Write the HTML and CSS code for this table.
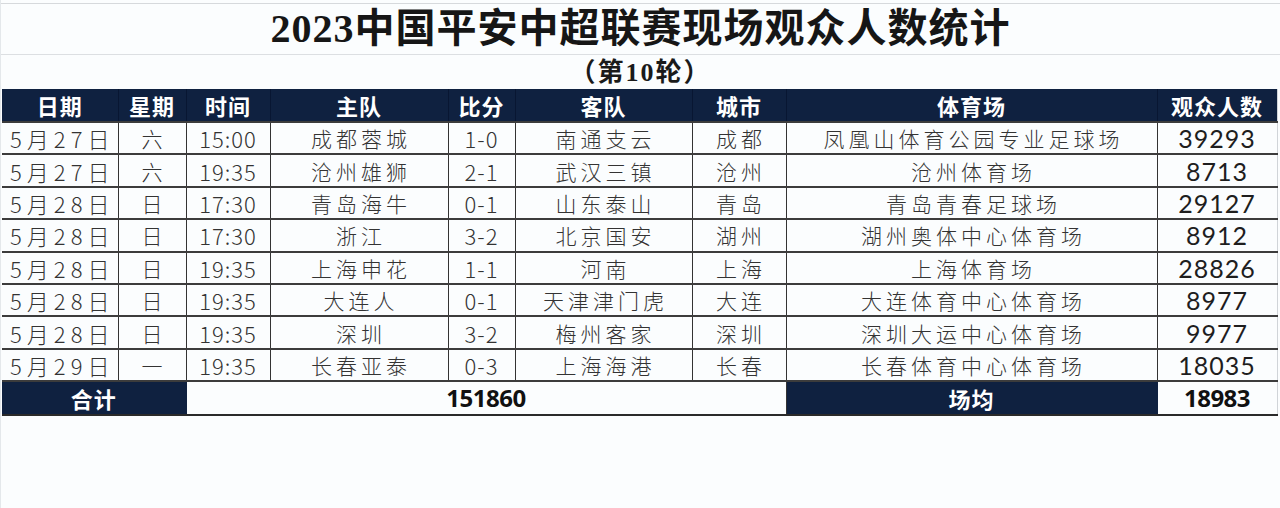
FILE: index.html
```html
<!DOCTYPE html>
<html lang="zh-CN">
<head>
<meta charset="utf-8">
<title>2023中国平安中超联赛现场观众人数统计</title>
<link rel="stylesheet" href="styles.css">
</head>
<body>
<div class="page">
  <div class="title">2023中国平安中超联赛现场观众人数统计</div>
  <div class="subtitle">（第10轮）</div>
  <table class="stats">
    <colgroup>
      <col class="w-date"><col class="w-week"><col class="w-time"><col class="w-home">
      <col class="w-score"><col class="w-away"><col class="w-city"><col class="w-venue"><col class="w-att">
    </colgroup>
    <thead>
      <tr>
        <th>日期</th><th>星期</th><th>时间</th><th>主队</th><th>比分</th><th>客队</th><th>城市</th><th>体育场</th><th>观众人数</th>
      </tr>
    </thead>
    <tbody>
      <tr><td class="date">5月27日</td><td class="cjk">六</td><td class="num">15:00</td><td class="cjk">成都蓉城</td><td class="num">1-0</td><td class="cjk">南通支云</td><td class="cjk">成都</td><td class="cjk">凤凰山体育公园专业足球场</td><td class="att">39293</td></tr>
      <tr><td class="date">5月27日</td><td class="cjk">六</td><td class="num">19:35</td><td class="cjk">沧州雄狮</td><td class="num">2-1</td><td class="cjk">武汉三镇</td><td class="cjk">沧州</td><td class="cjk">沧州体育场</td><td class="att">8713</td></tr>
      <tr><td class="date">5月28日</td><td class="cjk">日</td><td class="num">17:30</td><td class="cjk">青岛海牛</td><td class="num">0-1</td><td class="cjk">山东泰山</td><td class="cjk">青岛</td><td class="cjk">青岛青春足球场</td><td class="att">29127</td></tr>
      <tr><td class="date">5月28日</td><td class="cjk">日</td><td class="num">17:30</td><td class="cjk">浙江</td><td class="num">3-2</td><td class="cjk">北京国安</td><td class="cjk">湖州</td><td class="cjk">湖州奥体中心体育场</td><td class="att">8912</td></tr>
      <tr><td class="date">5月28日</td><td class="cjk">日</td><td class="num">19:35</td><td class="cjk">上海申花</td><td class="num">1-1</td><td class="cjk">河南</td><td class="cjk">上海</td><td class="cjk">上海体育场</td><td class="att">28826</td></tr>
      <tr><td class="date">5月28日</td><td class="cjk">日</td><td class="num">19:35</td><td class="cjk">大连人</td><td class="num">0-1</td><td class="cjk">天津津门虎</td><td class="cjk">大连</td><td class="cjk">大连体育中心体育场</td><td class="att">8977</td></tr>
      <tr><td class="date">5月28日</td><td class="cjk">日</td><td class="num">19:35</td><td class="cjk">深圳</td><td class="num">3-2</td><td class="cjk">梅州客家</td><td class="cjk">深圳</td><td class="cjk">深圳大运中心体育场</td><td class="att">9977</td></tr>
      <tr><td class="date">5月29日</td><td class="cjk">一</td><td class="num">19:35</td><td class="cjk">长春亚泰</td><td class="num">0-3</td><td class="cjk">上海海港</td><td class="cjk">长春</td><td class="cjk">长春体育中心体育场</td><td class="att">18035</td></tr>
    </tbody>
    <tfoot>
      <tr>
        <td class="dark-cell" colspan="2">合计</td>
        <td class="sum-cell" colspan="5">151860</td>
        <td class="dark-cell">场均</td>
        <td class="sum-cell">18983</td>
      </tr>
    </tfoot>
  </table>
</div>
</body>
</html>
```

FILE: styles.css
```css
html, body {
  margin: 0;
  padding: 0;
  background: #fbfdfe;
}

.page {
  width: 1280px;
  height: 508px;
  overflow: hidden;
  box-sizing: border-box;
  padding-top: 3px;
  border-left: 1px solid #e4e8eb;
  font-family: "Noto Sans CJK SC", sans-serif;
  color: #222;
}

.title {
  border-top: 1px solid #d6d9dc;
  border-bottom: 1px solid #dcdfe2;
  height: 50px;
  line-height: 50px;
  text-align: center;
  font-family: "Liberation Serif", "Noto Sans CJK SC", serif;
  font-size: 40px;
  font-weight: 700;
  letter-spacing: 1px;
  color: #161616;
}

.subtitle {
  height: 34px;
  line-height: 36px;
  text-align: center;
  font-family: "Liberation Serif", "Noto Sans CJK SC", serif;
  font-size: 26px;
  font-weight: 700;
  letter-spacing: 2px;
  color: #1a1a1a;
}

.stats {
  margin-left: 1px;
  width: 1275px;
  table-layout: fixed;
  border-collapse: collapse;
}

.w-date { width: 116px; }
.w-week { width: 68px; }
.w-time { width: 84px; }
.w-home { width: 178px; }
.w-score { width: 67px; }
.w-away { width: 177px; }
.w-city { width: 94px; }
.w-venue { width: 371px; }
.w-att { width: 120px; }

.stats th {
  height: 32px;
  padding: 0;
  background: #0f2140;
  color: #ffffff;
  font-size: 22px;
  font-weight: 700;
  line-height: 32px;
  border-left: 1px solid #081632;
  border-right: 1px solid #081632;
  letter-spacing: 1px;
}

.stats td {
  height: 30.4px;
  padding: 0;
  text-align: center;
  line-height: 30px;
  border-top: 2px solid #3c3c3c;
  border-bottom: 2px solid #3c3c3c;
  border-left: 1px solid #333;
  border-right: 1px solid #333;
  font-size: 21px;
  font-weight: 300;
  color: #333;
  white-space: nowrap;
}

.stats td:first-child,
.stats th:first-child {
  border-left: 0;
}

.stats td:last-child,
.stats th:last-child {
  border-right: 1px solid #d0d4d8;
}

.stats td.cjk {
  letter-spacing: 4px;
  padding-left: 4px;
}

.stats td.date {
  letter-spacing: 5px;
  font-size: 22px;
  padding-left: 5px;
}

.stats td.num {
  font-size: 22px;
  letter-spacing: 1px;
}

.stats td.att {
  font-family: "Lato", "Noto Sans CJK SC", sans-serif;
  font-size: 25px;
  font-weight: 400;
  letter-spacing: 1px;
  color: #1e1e1e;
}

.stats tfoot td {
  height: 32px;
  font-weight: 700;
  border-bottom: 2px solid #2a2a2a;
}

.stats td.dark-cell {
  background: #0f2140;
  color: #ffffff;
  font-size: 22px;
  letter-spacing: 1px;
  border-left-color: #0f2140;
  border-right-color: #0f2140;
}

.stats td.sum-cell {
  font-family: "Open Sans", "Noto Sans CJK SC", sans-serif;
  font-size: 24px;
  font-weight: 700;
  color: #111;
  letter-spacing: -0.5px;
}
```
